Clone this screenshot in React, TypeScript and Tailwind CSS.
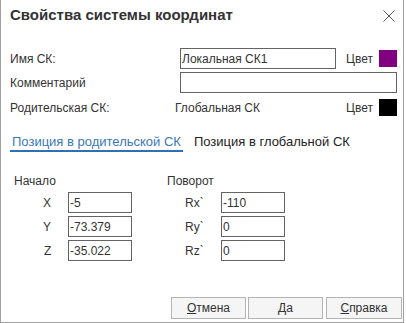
const Field = ({ value, w }: { value: string; w: string }) => (
  <input
    readOnly
    defaultValue={value}
    className={`${w} h-[21px] border border-[#646464] pl-[1px] text-[12px] text-[#333] outline-none bg-white`}
  />
);

const Swatch = ({ color }: { color: string }) => (
  <div className="flex items-center">
    <span className="text-[12px] text-[#333]">Цвет</span>
    <div className={`ml-[6px] w-[18px] h-[17px] ${color}`} />
  </div>
);

const CoordRow = ({
  label,
  value,
  indent,
  labelW,
}: {
  label: string;
  value: string;
  indent: string;
  labelW: string;
}) => (
  <div className={`flex items-center h-[21px] ${indent}`}>
    <span className={`${labelW} text-[12px] text-[#333]`}>{label}</span>
    <Field value={value} w="w-[64px]" />
  </div>
);

export default function App() {
  return (
    <div className="w-[404px] h-[323px] bg-white border-x border-b border-[#a0a0a0] flex flex-col font-['Liberation_Sans',Arial,sans-serif] text-[12px] text-[#333]">
      {/* title */}
      <div className="flex items-start justify-between pt-[5px] pl-[9px] pr-[8px]">
        <h1 className="text-[15px] leading-[20px] font-bold text-[#333]">
          Свойства системы координат
        </h1>
        <svg width="12" height="12" viewBox="0 0 12 12" className="mt-[5px]">
          <path d="M0.5 0.5 L11.5 11.5 M11.5 0.5 L0.5 11.5" stroke="#555" strokeWidth="1" />
        </svg>
      </div>

      <div className="pl-[9px] pr-[6px]">
        <div className="flex items-center h-[21px] mt-[23px]">
          <span className="w-[170px]">Имя СК:</span>
          <Field value="Локальная СК1" w="w-[156px]" />
          <div className="flex-1" />
          <Swatch color="bg-[#800080]" />
        </div>
        <div className="flex items-center h-[21px] mt-[3px]">
          <span className="w-[170px]">Комментарий</span>
          <Field value="" w="w-[218px]" />
        </div>
        <div className="flex items-center h-[17px] mt-[6px]">
          <span className="w-[165px]">Родительская СК:</span>
          <span>Глобальная СК</span>
          <div className="flex-1" />
          <Swatch color="bg-black" />
        </div>

        {/* tabs */}
        <div className="flex mt-[17px] text-[13px] leading-[17px]">
          <div className="px-[2px] border-b-2 border-[#2e6fb5] text-[#3a78b8]">
            Позиция в родительской СК
          </div>
          <div className="ml-[9px] px-[2px] text-[#222]">Позиция в глобальной СК</div>
        </div>

        <div className="flex mt-[22px]">
          <div className="ml-[4px] w-[153px]">
            <div className="leading-[15px] h-[15px]">Начало</div>
            <div className="mt-[3px] flex flex-col gap-[3px]">
              <CoordRow label="X" value="-5" indent="pl-[29px]" labelW="w-[25px]" />
              <CoordRow label="Y" value="-73.379" indent="pl-[29px]" labelW="w-[25px]" />
              <CoordRow label="Z" value="-35.022" indent="pl-[30px]" labelW="w-[24px]" />
            </div>
          </div>
          <div>
            <div className="leading-[15px] h-[15px]">Поворот</div>
            <div className="mt-[3px] flex flex-col gap-[3px]">
              <CoordRow label="Rx`" value="-110" indent="pl-[18px]" labelW="w-[36px]" />
              <CoordRow label="Ry`" value="0" indent="pl-[18px]" labelW="w-[36px]" />
              <CoordRow label="Rz`" value="0" indent="pl-[18px]" labelW="w-[36px]" />
            </div>
          </div>
        </div>
      </div>

      {/* buttons */}
      <div className="mt-auto mb-[3px] flex justify-end pr-[1px]">
        <button className="w-[75px] h-[22px] border border-[#b4b4b4] bg-[#f5f5f5] text-[12px] text-[#333]">
          <span className="underline">О</span>тмена
        </button>
        <button className="ml-[2px] w-[75px] h-[22px] border border-[#b4b4b4] bg-[#f5f5f5] text-[12px] text-[#333]">
          Да
        </button>
        <button className="ml-[3px] w-[76px] h-[22px] border border-[#b4b4b4] bg-[#f5f5f5] text-[12px] text-[#333]">
          <span className="underline">С</span>правка
        </button>
      </div>
    </div>
  );
}
